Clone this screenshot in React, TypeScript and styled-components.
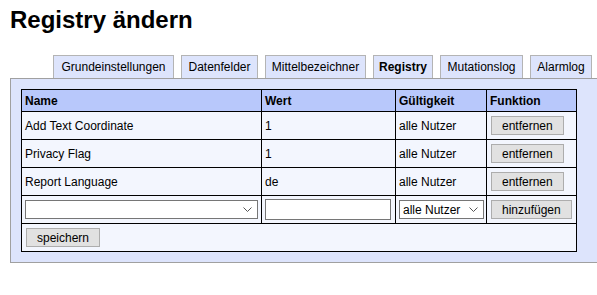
import React from "react"
import { createGlobalStyle, styled } from "styled-components"

const GlobalStyle = createGlobalStyle`
    html, body {
        margin: 0;
        padding: 0;
        background: #ffffff;
        overflow: hidden;
    }
    body {
        font-family: "Liberation Sans", Arial, sans-serif;
        font-size: 12px;
        color: #000000;
    }
`

const Page = styled.div`
    padding: 6px 0 0 10px;
`

const Title = styled.h1`
    margin: 0;
    font-size: 24px;
    font-weight: bold;
    line-height: 28px;
`

const TabBar = styled.div`
    display: flex;
    gap: 7px;
    margin: 20px 0 0 43px;
`

const Tab = styled.div<{ $w: number; $active?: boolean }>`
    width: ${p => p.$w}px;
    height: 23px;
    box-sizing: border-box;
    display: flex;
    align-items: center;
    justify-content: center;
    background: #dde4fc;
    border: 1px solid #b4b4b4;
    border-bottom: none;
    font-weight: ${p => (p.$active ? "bold" : "normal")};
    margin-top: 1px;
`

const Panel = styled.div`
    background: #dde4fc;
    border: 1px solid #a0a0a0;
    border-right: none;
    padding: 10px;
`

const Table = styled.table`
    width: 555px;
    border-collapse: collapse;
    table-layout: fixed;
    border: 1px solid #000000;
`

const Th = styled.th`
    background: #b8c8fb;
    border: 1px solid #000000;
    text-align: left;
    font-weight: bold;
    height: 22px;
    padding: 0 3px;
    box-sizing: border-box;
`

const Td = styled.td`
    background: #f3f6fe;
    border: 1px solid #000000;
    height: 28px;
    padding: 0 3px;
    box-sizing: border-box;
    vertical-align: middle;
    white-space: nowrap;
`

const Button = styled.button`
    height: 19px;
    padding: 0 10px;
    background: #e1e1e1;
    border: 1px solid #adadad;
    border-radius: 0;
    font-family: "Liberation Sans", Arial, sans-serif;
    font-size: 12px;
    color: #000000;
    line-height: 16px;
    margin-left: 1px;
`

const SelectWrap = styled.div<{ $w: number }>`
    position: relative;
    width: ${p => p.$w}px;
    height: 19px;
`

const Select = styled.select`
    appearance: none;
    width: 100%;
    height: 100%;
    box-sizing: border-box;
    border: 1px solid #767676;
    border-radius: 0;
    background: #ffffff;
    font-family: "Liberation Sans", Arial, sans-serif;
    font-size: 12px;
    color: #000000;
    padding: 0 3px;
    margin: 0;
`

const Chevron = styled.svg`
    position: absolute;
    right: 6px;
    top: 7px;
    pointer-events: none;
`

const TextInput = styled.input`
    width: 126px;
    height: 21px;
    box-sizing: border-box;
    border: 1px solid #767676;
    border-radius: 0;
    margin: 0;
    padding: 0 3px;
    font-family: "Liberation Sans", Arial, sans-serif;
    font-size: 12px;
`

const rows = [
    { name: "Add Text Coordinate", value: "1" },
    { name: "Privacy Flag", value: "1" },
    { name: "Report Language", value: "de" },
]

const tabs = [
    { label: "Grundeinstellungen", w: 121 },
    { label: "Datenfelder", w: 77 },
    { label: "Mittelbezeichner", w: 101 },
    { label: "Registry", w: 60, active: true },
    { label: "Mutationslog", w: 83 },
    { label: "Alarmlog", w: 62 },
]

function Dropdown({ width, children }: { width: number; children?: React.ReactNode }) {
    return (
        <SelectWrap $w={width}>
            <Select>{children}</Select>
            <Chevron width="9" height="5" viewBox="0 0 9 5">
                <path d="M0.5 0.5 L4.5 4.5 L8.5 0.5" fill="none" stroke="#555555" strokeWidth="1" />
            </Chevron>
        </SelectWrap>
    )
}

export default function App() {
    return (
        <>
            <GlobalStyle />
            <Page>
                <Title>Registry ändern</Title>
                <TabBar>
                    {tabs.map(t => (
                        <Tab key={t.label} $w={t.w} $active={t.active}>{t.label}</Tab>
                    ))}
                </TabBar>
                <Panel>
                    <Table>
                        <colgroup>
                            <col style={{ width: 240 }} />
                            <col style={{ width: 134 }} />
                            <col style={{ width: 91 }} />
                            <col style={{ width: 90 }} />
                        </colgroup>
                        <thead>
                            <tr>
                                <Th>Name</Th>
                                <Th>Wert</Th>
                                <Th>Gültigkeit</Th>
                                <Th>Funktion</Th>
                            </tr>
                        </thead>
                        <tbody>
                            {rows.map(r => (
                                <tr key={r.name}>
                                    <Td>{r.name}</Td>
                                    <Td>{r.value}</Td>
                                    <Td>alle Nutzer</Td>
                                    <Td><Button>entfernen</Button></Td>
                                </tr>
                            ))}
                            <tr>
                                <Td><Dropdown width={233}><option></option></Dropdown></Td>
                                <Td><TextInput type="text" /></Td>
                                <Td><Dropdown width={85}><option>alle Nutzer</option></Dropdown></Td>
                                <Td><Button>hinzufügen</Button></Td>
                            </tr>
                            <tr>
                                <Td colSpan={4}><Button>speichern</Button></Td>
                            </tr>
                        </tbody>
                    </Table>
                </Panel>
            </Page>
        </>
    )
}
